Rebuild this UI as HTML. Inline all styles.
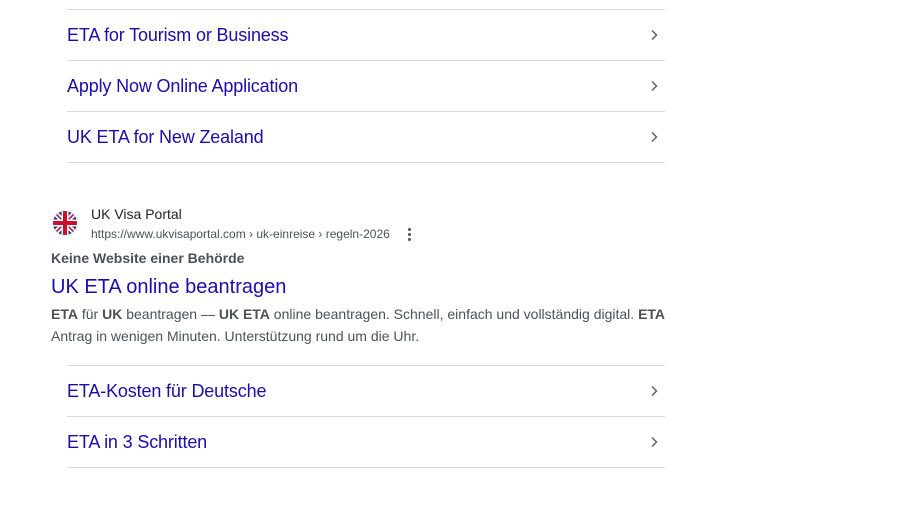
<!DOCTYPE html>
<html><head><meta charset="utf-8"><style>
body{margin:0;width:900px;height:505px;background:#fff;font-family:"Liberation Sans",Arial,sans-serif;position:relative;overflow:hidden}
.a{position:absolute}
.line{position:absolute;left:67px;width:598px;height:1px;background:#dadce0}
.sl{position:absolute;left:67px;font-size:18px;color:#1a0dab;line-height:22px;letter-spacing:-0.15px}
.chev{position:absolute;left:650px;width:8px;height:12px}
</style></head><body>
<div class="line" style="top:9px"></div>
<div class="sl" style="top:24px">ETA for Tourism or Business</div>
<svg class="chev" style="top:29px" viewBox="0 0 8 12"><path d="M2 1.5 L6.5 6 L2 10.5" fill="none" stroke="#5f6368" stroke-width="1.5"/></svg>
<div class="line" style="top:60px"></div>
<div class="sl" style="top:75px">Apply Now Online Application</div>
<svg class="chev" style="top:80px" viewBox="0 0 8 12"><path d="M2 1.5 L6.5 6 L2 10.5" fill="none" stroke="#5f6368" stroke-width="1.5"/></svg>
<div class="line" style="top:111px"></div>
<div class="sl" style="top:126px">UK ETA for New Zealand</div>
<svg class="chev" style="top:131px" viewBox="0 0 8 12"><path d="M2 1.5 L6.5 6 L2 10.5" fill="none" stroke="#5f6368" stroke-width="1.5"/></svg>
<div class="line" style="top:162px"></div>

<svg class="a" style="left:51px;top:209px" width="28" height="28" viewBox="0 0 28 28">
<defs><clipPath id="c"><circle cx="14" cy="14" r="12"/></clipPath></defs>
<circle cx="14" cy="14" r="13.5" fill="#f1f3f4"/>
<g clip-path="url(#c)"><rect width="28" height="28" fill="#1f3a7a"/>
<path d="M0 0L28 28M28 0L0 28" stroke="#fff" stroke-width="5"/>
<path d="M0 0L28 28M28 0L0 28" stroke="#c8102e" stroke-width="1.6"/>
<path d="M14 0V28M0 14H28" stroke="#fff" stroke-width="7"/>
<path d="M14 0V28M0 14H28" stroke="#c8102e" stroke-width="4"/></g></svg>
<div class="a" style="left:91px;top:206px;font-size:14px;color:#202124">UK Visa Portal</div>
<div class="a" style="left:91px;top:227px;font-size:12px;color:#4d5156">https://www.ukvisaportal.com › uk-einreise › regeln-2026</div>
<div class="a" style="left:408px;top:228px;width:3px">
<div style="width:3px;height:3px;border-radius:50%;background:#4d5156;margin-bottom:2px"></div>
<div style="width:3px;height:3px;border-radius:50%;background:#4d5156;margin-bottom:2px"></div>
<div style="width:3px;height:3px;border-radius:50%;background:#4d5156"></div></div>
<div class="a" style="left:51px;top:250px;font-size:14px;font-weight:bold;color:#4d5156">Keine Website einer Behörde</div>
<div class="a" style="left:51px;top:276px;font-size:20px;color:#1a0dab">UK ETA online beantragen</div>
<div class="a" style="left:51px;top:303px;font-size:14px;line-height:22px;color:#4d5156;width:620px">
<b>ETA</b> für <b>UK</b> beantragen — <b>UK ETA</b> online beantragen. Schnell, einfach und vollständig digital. <b>ETA</b><br>Antrag in wenigen Minuten. Unterstützung rund um die Uhr.</div>

<div class="line" style="top:365px"></div>
<div class="sl" style="top:380px">ETA-Kosten für Deutsche</div>
<svg class="chev" style="top:385px" viewBox="0 0 8 12"><path d="M2 1.5 L6.5 6 L2 10.5" fill="none" stroke="#5f6368" stroke-width="1.5"/></svg>
<div class="line" style="top:416px"></div>
<div class="sl" style="top:431px">ETA in 3 Schritten</div>
<svg class="chev" style="top:436px" viewBox="0 0 8 12"><path d="M2 1.5 L6.5 6 L2 10.5" fill="none" stroke="#5f6368" stroke-width="1.5"/></svg>
<div class="line" style="top:467px"></div>
</body></html>
